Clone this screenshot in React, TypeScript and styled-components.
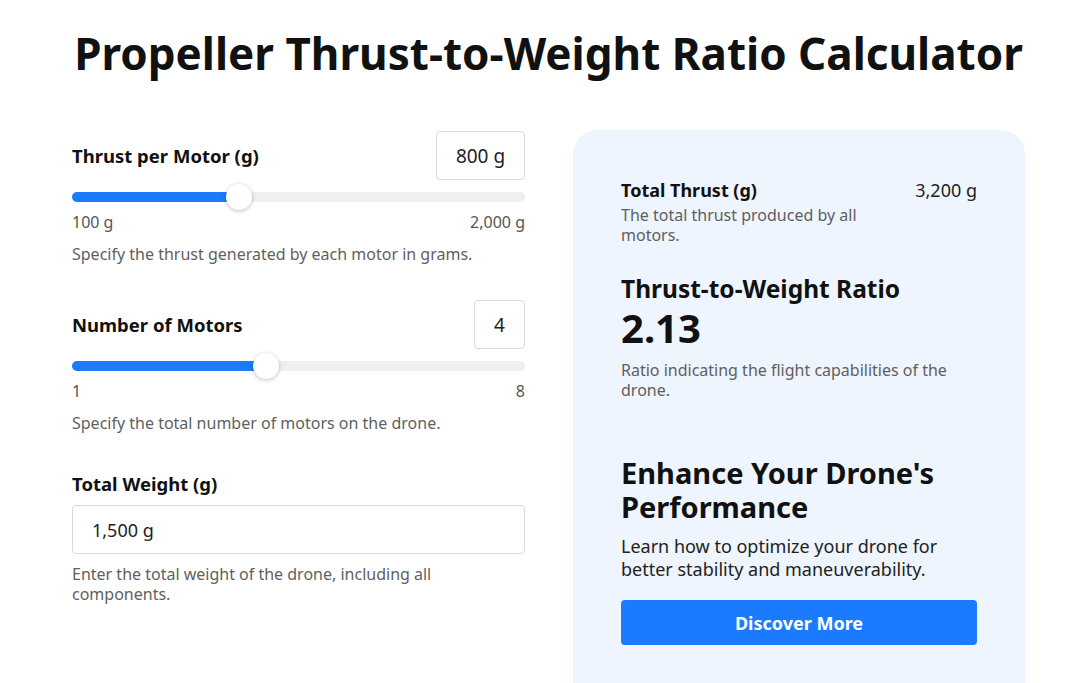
import React, { useState } from "react";
import styled, { createGlobalStyle } from "styled-components";

const GlobalStyle = createGlobalStyle`
    html, body {
        margin: 0;
        padding: 0;
        background: #ffffff;
        overflow: hidden;
    }
    body {
        font-family: "Noto Sans", "Open Sans", sans-serif;
        color: #111111;
    }
`;

const Page = styled.div`
    width: 953px;
    margin-left: 72px;
    padding-top: 25px;
`;

const Title = styled.h1`
    margin: 0 0 48px;
    font-size: 44px;
    line-height: 57px;
    font-weight: 700;
    text-align: center;
    color: #111111;
`;

const Columns = styled.div`
    display: grid;
    grid-template-columns: 453px 452px;
    column-gap: 48px;
    align-items: start;
`;

const Form = styled.div`
    display: flex;
    flex-direction: column;
    padding-top: 1px;
`;

const Field = styled.div<{ $gap?: number }>`
    display: flex;
    flex-direction: column;
    margin-bottom: ${props => props.$gap ?? 0}px;
`;

const FieldHeader = styled.div`
    display: flex;
    align-items: center;
    justify-content: space-between;
    height: 49px;
`;

const Label = styled.label`
    font-size: 18.5px;
    line-height: 24px;
    font-weight: 700;
    color: #111111;
`;

const ValueBox = styled.div<{ $width: number }>`
    box-sizing: border-box;
    width: ${props => props.$width}px;
    height: 49px;
    border: 1px solid #d9d9d9;
    border-radius: 4px;
    display: flex;
    align-items: center;
    justify-content: center;
    font-size: 19px;
    color: #222222;
    background: #ffffff;
`;

const Track = styled.div`
    position: relative;
    height: 10px;
    margin-top: 12px;
    border-radius: 5px;
    background: #efefef;
`;

const Fill = styled.div`
    height: 100%;
    border-radius: 5px;
    background: #1a7bff;
`;

const Thumb = styled.div`
    position: absolute;
    top: 50%;
    width: 26px;
    height: 26px;
    border-radius: 50%;
    background: #ffffff;
    box-shadow: 0 1px 4px rgba(0, 0, 0, 0.25);
    transform: translate(-50%, -50%);
`;

const RangeLabels = styled.div`
    display: flex;
    justify-content: space-between;
    margin-top: 10px;
    font-size: 16px;
    line-height: 20px;
    color: #555555;
`;

const Hint = styled.p<{ $top?: number }>`
    margin: ${props => props.$top ?? 12}px 0 0;
    font-size: 16px;
    line-height: 20px;
    color: #5f5f5f;
`;

const WeightInput = styled.input`
    box-sizing: border-box;
    width: 100%;
    height: 49px;
    margin-top: 9px;
    padding: 0 19px;
    border: 1px solid #d9d9d9;
    border-radius: 4px;
    font-family: inherit;
    font-size: 18px;
    color: #222222;
    outline: none;
`;

const Panel = styled.aside`
    box-sizing: border-box;
    min-height: 580px;
    padding: 49px 48px 40px;
    border-radius: 24px;
    background: #eef5fe;
`;

const StatRow = styled.div`
    display: flex;
    justify-content: space-between;
    align-items: flex-start;
`;

const StatText = styled.div`
    max-width: 250px;
`;

const StatLabel = styled.div`
    font-size: 18px;
    line-height: 23px;
    font-weight: 700;
`;

const StatValue = styled.div`
    font-size: 18px;
    line-height: 23px;
    color: #222222;
`;

const PanelHint = styled.p<{ $top: number }>`
    margin: ${props => props.$top}px 0 0;
    font-size: 16px;
    line-height: 20px;
    color: #5f5f5f;
`;

const RatioTitle = styled.h2`
    margin: 29px 0 0;
    font-size: 24.5px;
    line-height: 30px;
    font-weight: 700;
`;

const RatioValue = styled.div`
    font-size: 40px;
    line-height: 48px;
    font-weight: 700;
`;

const PromoTitle = styled.h2`
    margin: 56px 0 0;
    font-size: 29px;
    line-height: 34px;
    font-weight: 700;
`;

const PromoText = styled.p`
    margin: 11px 0 0;
    font-size: 18px;
    line-height: 23px;
    color: #222222;
`;

const DiscoverButton = styled.button`
    width: 100%;
    height: 45px;
    margin-top: 19px;
    border: none;
    border-radius: 4px;
    background: #1a7bff;
    color: #ffffff;
    font-family: inherit;
    font-size: 18px;
    font-weight: 700;
    cursor: pointer;
`;

const fmt = (n: number) => n.toLocaleString("en-US");

function Slider({ value, min, max }: { value: number; min: number; max: number }) {
    const pct = ((value - min) / (max - min)) * 100;
    return (
        <Track>
            <Fill style={{ width: `${pct}%` }} />
            <Thumb style={{ left: `${pct}%` }} />
        </Track>
    );
}

export default function App() {
    const [thrust] = useState(800);
    const [motors] = useState(4);
    const [weight, setWeight] = useState("1,500 g");

    const totalThrust = thrust * motors;
    const ratio = (totalThrust / 1500).toFixed(2);

    return (
        <>
            <GlobalStyle />
            <Page>
                <Title>Propeller Thrust-to-Weight Ratio Calculator</Title>
                <Columns>
                    <Form>
                        <Field $gap={36}>
                            <FieldHeader>
                                <Label>Thrust per Motor (g)</Label>
                                <ValueBox $width={89}>{fmt(thrust)} g</ValueBox>
                            </FieldHeader>
                            <Slider value={thrust} min={100} max={2000} />
                            <RangeLabels>
                                <span>100 g</span>
                                <span>2,000 g</span>
                            </RangeLabels>
                            <Hint>Specify the thrust generated by each motor in grams.</Hint>
                        </Field>

                        <Field $gap={39}>
                            <FieldHeader>
                                <Label>Number of Motors</Label>
                                <ValueBox $width={51}>{motors}</ValueBox>
                            </FieldHeader>
                            <Slider value={motors} min={1} max={8} />
                            <RangeLabels>
                                <span>1</span>
                                <span>8</span>
                            </RangeLabels>
                            <Hint>Specify the total number of motors on the drone.</Hint>
                        </Field>

                        <Field>
                            <Label>Total Weight (g)</Label>
                            <WeightInput value={weight} onChange={e => setWeight(e.target.value)} />
                            <Hint $top={10}>
                                Enter the total weight of the drone, including all
                                <br />
                                components.
                            </Hint>
                        </Field>
                    </Form>

                    <Panel>
                        <StatRow>
                            <StatText>
                                <StatLabel>Total Thrust (g)</StatLabel>
                                <PanelHint $top={3}>The total thrust produced by all motors.</PanelHint>
                            </StatText>
                            <StatValue>{fmt(totalThrust)} g</StatValue>
                        </StatRow>

                        <RatioTitle>Thrust-to-Weight Ratio</RatioTitle>
                        <RatioValue>{ratio}</RatioValue>
                        <PanelHint $top={8}>Ratio indicating the flight capabilities of the drone.</PanelHint>

                        <PromoTitle>Enhance Your Drone's Performance</PromoTitle>
                        <PromoText>Learn how to optimize your drone for better stability and maneuverability.</PromoText>
                        <DiscoverButton>Discover More</DiscoverButton>
                    </Panel>
                </Columns>
            </Page>
        </>
    );
}
